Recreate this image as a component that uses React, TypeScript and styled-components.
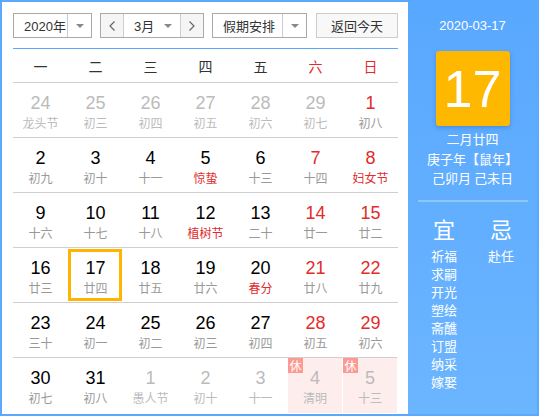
import styled, { createGlobalStyle, css } from 'styled-components';

const GlobalStyle = createGlobalStyle`
  html, body {
    margin: 0;
    padding: 0;
    background: #fff;
  }
  * {
    box-sizing: border-box;
  }
`;

const FONT = `"Liberation Sans", "Noto Sans CJK SC", sans-serif`;
const RED = '#e32b2b';
const BLUE = '#5aa9ff';

const Frame = styled.div`
  width: 539px;
  height: 416px;
  border: 2px solid ${BLUE};
  display: flex;
  font-family: ${FONT};
  overflow: hidden;
`;

const Main = styled.div`
  width: 406px;
  padding: 11px 10px 0 11px;
  background: #fff;
  display: flex;
  flex-direction: column;
`;

const Toolbar = styled.div`
  display: flex;
  align-items: center;
  height: 25px;
  margin-bottom: 10px;
  font-size: 13px;
  color: #333;
`;

const SelectBox = styled.div<{ $w: number; $ml?: number }>`
  width: ${(p) => p.$w}px;
  height: 25px;
  margin-left: ${(p) => p.$ml ?? 0}px;
  border: 1px solid #a9a9a9;
  display: flex;
  align-items: center;
  background: #fff;
`;

const SelectText = styled.div`
  flex: 1;
  padding-left: 10px;
  white-space: nowrap;
`;

const ArrowPart = styled.div`
  width: 24px;
  height: 100%;
  border-left: 1px solid #ccc;
  display: flex;
  align-items: center;
  justify-content: center;
  &::after {
    content: '';
    border-left: 4px solid transparent;
    border-right: 4px solid transparent;
    border-top: 4px solid #888;
  }
`;

const MonthGroup = styled.div`
  margin-left: 8px;
  height: 25px;
  width: 104px;
  border: 1px solid #a9a9a9;
  display: flex;
  align-items: stretch;
`;

const NavBtn = styled.div`
  width: 22px;
  background: #f5f5f5;
  display: flex;
  align-items: center;
  justify-content: center;
`;

const MonthSel = styled.div`
  flex: 1;
  display: flex;
  align-items: center;
  border-left: 1px solid #ccc;
  border-right: 1px solid #ccc;
  padding-left: 10px;
  position: relative;
  &::after {
    content: '';
    position: absolute;
    right: 8px;
    top: 10px;
    border-left: 4px solid transparent;
    border-right: 4px solid transparent;
    border-top: 4px solid #888;
  }
`;

const TodayBtn = styled.div`
  margin-left: 9px;
  width: 82px;
  height: 25px;
  border: 1px solid #ccc;
  background: #f8f8f8;
  display: flex;
  align-items: center;
  justify-content: center;
`;

const Divider = styled.div`
  height: 1px;
  background: ${BLUE};
`;

const Grid = styled.div`
  display: grid;
  grid-template-columns: repeat(7, 55px);
`;

const WeekHead = styled.div<{ $red?: boolean }>`
  height: 33px;
  display: flex;
  align-items: center;
  justify-content: center;
  font-size: 14px;
  color: ${(p) => (p.$red ? RED : '#333')};
  font-family: "Noto Sans CJK SC", sans-serif;
`;

const Row = styled.div`
  display: contents;
`;

const Cell = styled.div<{ $last?: boolean; $rest?: boolean; $sel?: boolean }>`
  position: relative;
  height: ${(p) => (p.$last ? 56 : 55)}px;
  border-top: 1px solid #cfcfcf;
  display: flex;
  flex-direction: column;
  align-items: center;
  padding-top: 9px;
  ${(p) =>
    p.$rest &&
    css`
      background: #fdeeed;
      border-right: 1px solid #fff;
    `}
  ${(p) =>
    p.$sel &&
    css`
      &::after {
        content: '';
        position: absolute;
        left: 0;
        right: 1px;
        top: 1px;
        bottom: 1px;
        border: 3px solid #ffb400;
      }
    `}
`;

const DayNum = styled.div<{ $c: string }>`
  font-size: 18px;
  line-height: 22px;
  color: ${(p) => p.$c};
`;

const Lunar = styled.div<{ $c: string }>`
  font-family: "Noto Sans CJK SC", sans-serif;
  font-size: 12px;
  line-height: 17px;
  color: ${(p) => p.$c};
  white-space: nowrap;
`;

const RestBadge = styled.div`
  position: absolute;
  left: 0;
  top: 0;
  width: 15px;
  height: 15px;
  background: #fb9a92;
  color: #fff;
  font-family: "Noto Sans CJK SC", sans-serif;
  font-size: 12px;
  line-height: 15px;
  text-align: center;
`;

const Side = styled.div`
  flex: 1;
  background: linear-gradient(180deg, #58a8ff 0%, #6cb5ff 100%);
  color: #fff;
  display: flex;
  flex-direction: column;
  align-items: center;
  padding-top: 15px;
  font-family: ${FONT};
`;

const SideDate = styled.div`
  font-size: 13px;
  line-height: 18px;
`;

const BigDay = styled.div`
  margin-top: 16px;
  width: 74px;
  height: 75px;
  background: #ffb800;
  border-radius: 3px;
  box-shadow: 0 2px 4px rgba(0, 60, 140, 0.25);
  display: flex;
  align-items: center;
  justify-content: center;
  font-size: 52px;
  color: #fff;
`;

const LunarInfo = styled.div`
  margin-top: 3px;
  font-family: "Noto Sans CJK SC", sans-serif;
  font-size: 13px;
  line-height: 19.5px;
  text-align: center;
  white-space: nowrap;
`;

const SideLine = styled.div`
  margin-top: 12px;
  width: 110px;
  height: 2px;
  background: #8ec6ff;
`;

const YiJi = styled.div`
  margin-top: 12px;
  display: grid;
  grid-template-columns: 52px 52px;
  column-gap: 5px;
  font-family: "Noto Sans CJK SC", sans-serif;
`;

const YiJiCol = styled.div`
  display: flex;
  flex-direction: column;
  align-items: center;
`;

const YiJiTitle = styled.div`
  font-size: 22px;
  line-height: 28px;
  margin-bottom: 5px;
`;

const YiJiItem = styled.div`
  font-size: 13px;
  line-height: 18px;
`;

const Chevron = ({ dir }: { dir: 'l' | 'r' }) => (
  <svg width="8" height="12" viewBox="0 0 8 12">
    <path
      d={dir === 'l' ? 'M6.5 1.5 L2 6 L6.5 10.5' : 'M1.5 1.5 L6 6 L1.5 10.5'}
      fill="none"
      stroke="#666"
      strokeWidth="1.2"
    />
  </svg>
);

type Day = {
  d: number;
  l: string;
  other?: boolean;
  fest?: boolean;
  rest?: boolean;
  sel?: boolean;
};

const weeks: Day[][] = [
  [
    { d: 24, l: '龙头节', other: true },
    { d: 25, l: '初三', other: true },
    { d: 26, l: '初四', other: true },
    { d: 27, l: '初五', other: true },
    { d: 28, l: '初六', other: true },
    { d: 29, l: '初七', other: true },
    { d: 1, l: '初八' },
  ],
  [
    { d: 2, l: '初九' },
    { d: 3, l: '初十' },
    { d: 4, l: '十一' },
    { d: 5, l: '惊蛰', fest: true },
    { d: 6, l: '十三' },
    { d: 7, l: '十四' },
    { d: 8, l: '妇女节', fest: true },
  ],
  [
    { d: 9, l: '十六' },
    { d: 10, l: '十七' },
    { d: 11, l: '十八' },
    { d: 12, l: '植树节', fest: true },
    { d: 13, l: '二十' },
    { d: 14, l: '廿一' },
    { d: 15, l: '廿二' },
  ],
  [
    { d: 16, l: '廿三' },
    { d: 17, l: '廿四', sel: true },
    { d: 18, l: '廿五' },
    { d: 19, l: '廿六' },
    { d: 20, l: '春分', fest: true },
    { d: 21, l: '廿八' },
    { d: 22, l: '廿九' },
  ],
  [
    { d: 23, l: '三十' },
    { d: 24, l: '初一' },
    { d: 25, l: '初二' },
    { d: 26, l: '初三' },
    { d: 27, l: '初四' },
    { d: 28, l: '初五' },
    { d: 29, l: '初六' },
  ],
  [
    { d: 30, l: '初七' },
    { d: 31, l: '初八' },
    { d: 1, l: '愚人节', other: true },
    { d: 2, l: '初十', other: true },
    { d: 3, l: '十一', other: true },
    { d: 4, l: '清明', other: true, rest: true },
    { d: 5, l: '十三', other: true, rest: true },
  ],
];

const weekNames = ['一', '二', '三', '四', '五', '六', '日'];
const yi = ['祈福', '求嗣', '开光', '塑绘', '斋醮', '订盟', '纳采', '嫁娶'];
const ji = ['赴任'];

export default function App() {
  return (
    <>
      <GlobalStyle />
      <Frame>
        <Main>
          <Toolbar>
            <SelectBox $w={79}>
              <SelectText>2020年</SelectText>
              <ArrowPart />
            </SelectBox>
            <MonthGroup>
              <NavBtn>
                <Chevron dir="l" />
              </NavBtn>
              <MonthSel>3月</MonthSel>
              <NavBtn>
                <Chevron dir="r" />
              </NavBtn>
            </MonthGroup>
            <SelectBox $w={95} $ml={8}>
              <SelectText>假期安排</SelectText>
              <ArrowPart />
            </SelectBox>
            <TodayBtn>返回今天</TodayBtn>
          </Toolbar>
          <Divider />
          <Grid>
            {weekNames.map((w, i) => (
              <WeekHead key={w} $red={i >= 5}>
                {w}
              </WeekHead>
            ))}
            {weeks.map((week, wi) => (
              <Row key={wi}>
                {week.map((day, di) => {
                  const weekend = di >= 5;
                  const numColor = day.other ? '#bbb' : weekend ? RED : '#000';
                  const lunarColor = day.other ? '#bbb' : day.fest ? RED : '#999';
                  return (
                    <Cell
                      key={di}
                      $last={wi === weeks.length - 1}
                      $rest={day.rest}
                      $sel={day.sel}
                    >
                      {day.rest && <RestBadge>休</RestBadge>}
                      <DayNum $c={numColor}>{day.d}</DayNum>
                      <Lunar $c={lunarColor}>{day.l}</Lunar>
                    </Cell>
                  );
                })}
              </Row>
            ))}
          </Grid>
        </Main>
        <Side>
          <SideDate>2020-03-17</SideDate>
          <BigDay>17</BigDay>
          <LunarInfo>
            二月廿四
            <br />
            庚子年【鼠年】
            <br />
            己卯月 己未日
          </LunarInfo>
          <SideLine />
          <YiJi>
            <YiJiCol>
              <YiJiTitle>宜</YiJiTitle>
              {yi.map((t) => (
                <YiJiItem key={t}>{t}</YiJiItem>
              ))}
            </YiJiCol>
            <YiJiCol>
              <YiJiTitle>忌</YiJiTitle>
              {ji.map((t) => (
                <YiJiItem key={t}>{t}</YiJiItem>
              ))}
            </YiJiCol>
          </YiJi>
        </Side>
      </Frame>
    </>
  );
}
